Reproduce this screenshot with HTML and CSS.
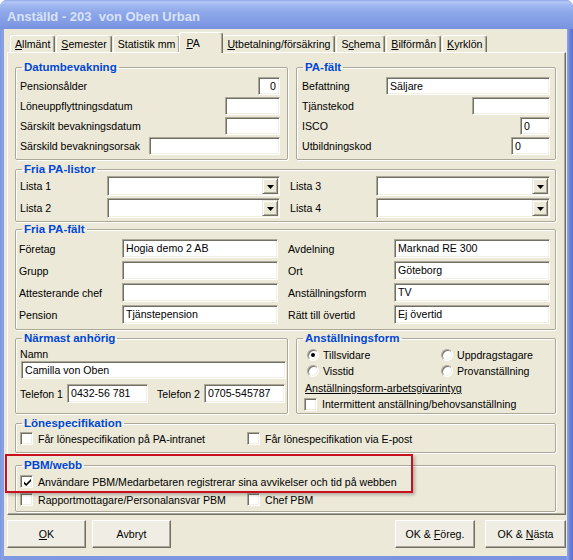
FILE: index.html
```html
<!DOCTYPE html>
<html lang="sv">
<head>
<meta charset="utf-8">
<title>Anställd - 203 von Oben Urban</title>
<link rel="stylesheet" href="styles.css">
</head>
<body>
<div class="window">
  <div class="titlebar">Anställd - 203  von Oben Urban</div>
  <div class="client">
    <div class="tabs">
      <div class="tab"><u>A</u>llmänt</div>
      <div class="tab"><u>S</u>emester</div>
      <div class="tab">Statistik mm</div>
      <div class="tab active"><u>P</u>A</div>
      <div class="tab"><u>U</u>tbetalning/försäkring</div>
      <div class="tab">S<u>c</u>hema</div>
      <div class="tab"><u>B</u>ilförmån</div>
      <div class="tab"><u>K</u>yrklön</div>
    </div>
    <div class="panel">
      <div class="row">
        <fieldset class="group g-top g-left">
          <legend>Datumbevakning</legend>
          <div class="stack datum">
            <div class="frow"><span>Pensionsålder</span><span class="field w22 num">0</span></div>
            <div class="frow"><span>Löneuppflyttningsdatum</span><span class="field w55"></span></div>
            <div class="frow"><span>Särskilt bevakningsdatum</span><span class="field w55"></span></div>
            <div class="frow"><span>Särskild bevakningsorsak</span><span class="field w131"></span></div>
          </div>
        </fieldset>
        <fieldset class="group g-top g-right">
          <legend>PA-fält</legend>
          <div class="stack pafalt">
            <div class="frow"><span>Befattning</span><span class="field w164">Säljare</span></div>
            <div class="frow"><span>Tjänstekod</span><span class="field w78"></span></div>
            <div class="frow"><span>ISCO</span><span class="field w30">0</span></div>
            <div class="frow"><span>Utbildningskod</span><span class="field w39">0</span></div>
          </div>
        </fieldset>
      </div>

      <fieldset class="group g-listor">
        <legend>Fria PA-listor</legend>
        <div class="listgrid">
          <span>Lista 1</span>
          <span class="field combo"><span class="ddbtn"><svg width="7" height="4" viewBox="0 0 7 4"><path d="M0 0H7L3.5 4Z" fill="#000"/></svg></span></span>
          <span class="col2">Lista 3</span>
          <span class="field combo"><span class="ddbtn"><svg width="7" height="4" viewBox="0 0 7 4"><path d="M0 0H7L3.5 4Z" fill="#000"/></svg></span></span>
          <span>Lista 2</span>
          <span class="field combo"><span class="ddbtn"><svg width="7" height="4" viewBox="0 0 7 4"><path d="M0 0H7L3.5 4Z" fill="#000"/></svg></span></span>
          <span class="col2">Lista 4</span>
          <span class="field combo"><span class="ddbtn"><svg width="7" height="4" viewBox="0 0 7 4"><path d="M0 0H7L3.5 4Z" fill="#000"/></svg></span></span>
        </div>
      </fieldset>

      <fieldset class="group g-fria">
        <legend>Fria PA-fält</legend>
        <div class="friagrid">
          <span>Företag</span><span class="field">Hogia demo 2 AB</span>
          <span class="col2">Avdelning</span><span class="field">Marknad RE 300</span>
          <span>Grupp</span><span class="field"></span>
          <span class="col2">Ort</span><span class="field">Göteborg</span>
          <span>Attesterande chef</span><span class="field"></span>
          <span class="col2">Anställningsform</span><span class="field">TV</span>
          <span>Pension</span><span class="field">Tjänstepension</span>
          <span class="col2">Rätt till övertid</span><span class="field">Ej övertid</span>
        </div>
      </fieldset>

      <div class="row row4">
        <fieldset class="group g-mid g-left">
          <legend>Närmast anhörig</legend>
          <div class="anhorig">
            <div class="namnlbl">Namn</div>
            <span class="field namn">Camilla von Oben</span>
            <div class="telrow">
              <span class="tl">Telefon 1</span><span class="field tel">0432-56 781</span>
              <span class="tl tl2">Telefon 2</span><span class="field tel">0705-545787</span>
            </div>
          </div>
        </fieldset>
        <fieldset class="group g-mid g-right">
          <legend>Anställningsform</legend>
          <div class="anstform">
            <div class="radios">
              <span class="ropt"><span class="radio on"></span>Tillsvidare</span>
              <span class="ropt"><span class="radio"></span>Uppdragstagare</span>
              <span class="ropt"><span class="radio"></span>Visstid</span>
              <span class="ropt"><span class="radio"></span>Provanställning</span>
            </div>
            <div class="link">Anställningsform-arbetsgivarintyg</div>
            <div class="opt opt-int"><span class="cb"></span>Intermittent anställning/behovsanställning</div>
          </div>
        </fieldset>
      </div>

      <fieldset class="group g-lone">
        <legend>Lönespecifikation</legend>
        <div class="optgrid lonegrid">
          <div class="opt"><span class="cb"></span>Får lönespecifikation på PA-intranet</div>
          <div class="opt"><span class="cb"></span>Får lönespecifikation via E-post</div>
        </div>
      </fieldset>

      <fieldset class="group g-pbm">
        <legend>PBM/webb</legend>
        <div class="pbmbody">
          <div class="opt"><span class="cb"><svg width="9" height="9" viewBox="0 0 9 9"><path d="M1 3.6L3.2 5.8L8 1V3.3L3.2 8.1L1 5.9Z" fill="#000"/></svg></span>Användare PBM/Medarbetaren registrerar sina avvikelser och tid på webben</div>
          <div class="optgrid pbmgrid">
            <div class="opt"><span class="cb"></span>Rapportmottagare/Personalansvar PBM</div>
            <div class="opt"><span class="cb"></span>Chef PBM</div>
          </div>
        </div>
      </fieldset>
    </div>

    <div class="buttons">
      <div class="btn b-ok"><span><u>O</u>K</span></div>
      <div class="btn b-avbryt">Avbryt</div>
      <div class="spacer"></div>
      <div class="btn b-foreg"><span>OK &amp; <u>F</u>öreg.</span></div>
      <div class="btn b-nasta"><span>OK &amp; <u>N</u>ästa</span></div>
    </div>
  </div>
  <div class="highlight"></div>
</div>
</body>
</html>
```
FILE: styles.css
```css
html, body {
  margin: 0;
  padding: 0;
  background: #ffffff;
}

body {
  font-family: "Liberation Sans", Arial, sans-serif;
  font-size: 10.6px;
  color: #000;
}

.window {
  position: relative;
  width: 573px;
  height: 560px;
  display: flex;
  flex-direction: column;
  border-radius: 7px 7px 0 0;
  overflow: hidden;
  background: linear-gradient(to right, #7d98e1 0, #8aa3e6 3px, #7f98e2 4px, #7a92e0 566px, #8ea4ea 567px, #6a82d8 570px, #5a6fcf 573px);
}

.titlebar {
  flex: none;
  height: 29px;
  box-sizing: border-box;
  padding: 4px 0 0 7px;
  display: flex;
  align-items: center;
  white-space: pre;
  font-family: "Liberation Sans", Arial, sans-serif;
  font-weight: bold;
  font-size: 13px;
  color: #d9e3f8;
  background: linear-gradient(to bottom, #8fa8e8 0, #b3c8f5 2px, #a2b9f0 5px, #8ea8ea 12px, #859fe6 20px, #7c97e2 26px, #7591de 29px);
}

.client {
  flex: 1;
  margin: 0 6px 4px 4px;
  background: #ece9d8;
  padding: 3px 1px 0 3px;
  display: flex;
  flex-direction: column;
}

/* Tabs */
.tabs {
  flex: none;
  display: flex;
  align-items: flex-end;
  gap: 1px;
  height: 20px;
  padding-left: 3px;
}

.tab {
  height: 17px;
  box-sizing: border-box;
  padding: 0 4px;
  line-height: 16px;
  white-space: nowrap;
  border: 1px solid #fff;
  border-right-color: #716f64;
  border-bottom: none;
  border-radius: 3px 3px 0 0;
  box-shadow: inset -1px 0 0 #aca899;
  background: #ece9d8;
}

.tab.active {
  position: relative;
  z-index: 1;
  width: 44px;
  height: 21px;
  margin: 0 -2px -1px -2px;
  padding: 2px 0 0 6px;
}

/* Panel */
.panel {
  flex: none;
  height: 463px;
  box-sizing: border-box;
  border: 1px solid;
  border-color: #fff #716f64 #716f64 #fff;
  box-shadow: inset -1px -1px 0 #aca899;
  padding: 7px 9px 0 7px;
}

.row {
  display: flex;
  gap: 8px;
}

.group {
  margin: 0;
  padding: 0;
  min-width: 0;
  box-sizing: border-box;
  border: 1px solid #aca899;
  border-radius: 2px;
  box-shadow: inset 1px 1px 0 #fff, 1px 1px 0 #fff;
}

.group legend {
  margin-left: 6px;
  padding: 0 2px;
  font-weight: bold;
  font-size: 11.5px;
  line-height: 14px;
  color: #0046d5;
}

.g-left { width: 273px; }
.g-right { width: 260px; }
.g-top { height: 100px; }
.g-listor { height: 60px; margin-top: 2px; }
.g-fria { height: 108px; }
.row4 { margin-top: 1px; }
.g-mid { height: 83px; }
.g-lone { height: 37px; margin-top: 2px; }
.g-pbm { height: 54px; margin-top: 5px; }

/* Fields */
.field {
  display: block;
  box-sizing: border-box;
  height: 18px;
  background: #fff;
  border: 1px solid;
  border-color: #aca899 #fff #fff #aca899;
  box-shadow: inset 1px 1px 0 #716f64, inset -1px -1px 0 #f1efe2;
  padding: 0 3px;
  line-height: 16px;
  white-space: nowrap;
  overflow: hidden;
}

.num { text-align: right; }
.w22 { width: 22px; }
.w55 { width: 55px; }
.w131 { width: 131px; }
.w164 { width: 164px; }
.w78 { width: 78px; }
.w30 { width: 30px; }
.w39 { width: 39px; }

.stack {
  display: flex;
  flex-direction: column;
  gap: 2px;
}

.datum { padding: 3px 7px 0 4px; }
.pafalt { padding: 3px 5px 0 5px; }

.frow {
  display: flex;
  justify-content: space-between;
  align-items: center;
  height: 18px;
}

/* Lists */
.listgrid {
  display: grid;
  grid-template-columns: 87px 173px 96px 174px;
  grid-auto-rows: 20px;
  row-gap: 2px;
  align-items: center;
  padding: 0 5px 0 4px;
}

.col2 { padding-left: 10px; }

.combo {
  height: 20px;
  display: flex;
  justify-content: flex-end;
  padding: 0;
}

.ddbtn {
  width: 16px;
  margin: 1px;
  box-sizing: border-box;
  border: 1px solid;
  border-color: #ece9d8 #716f64 #716f64 #ece9d8;
  box-shadow: inset 1px 1px 0 #fff, inset -1px -1px 0 #aca899;
  background: #ece9d8;
  display: flex;
  align-items: center;
  justify-content: center;
}

.ddbtn svg { display: block; margin-top: 1px; }

/* Fria PA-fält */
.friagrid {
  display: grid;
  grid-template-columns: 103px 156px 116px 156px;
  grid-auto-rows: 19px;
  row-gap: 3px;
  align-items: center;
  padding: 3px 5px 0 3px;
}

.friagrid .field { height: 19px; line-height: 17px; }

/* Närmast anhörig */
.anhorig { padding: 2px 1px 0 4px; }

.namnlbl { line-height: 14px; }

.namn { width: 265px; margin-left: 1px; }

.telrow {
  display: flex;
  align-items: center;
  height: 19px;
  margin-top: 5px;
}

.tl { width: 47px; flex: none; }
.tl2 { margin-left: 9px; }
.tel { width: 81px; height: 19px; line-height: 17px; flex: none; }

/* Anställningsform */
.anstform { padding: 2px 0 0 8px; }

.radios {
  display: grid;
  grid-template-columns: 134px auto;
  grid-auto-rows: 16px;
  margin-left: 2px;
}

.ropt {
  display: flex;
  align-items: center;
  gap: 4px;
}

.radio {
  width: 12px;
  height: 12px;
  box-sizing: border-box;
  border-radius: 50%;
  border: 1px solid;
  border-color: #aca899 #fff #fff #aca899;
  box-shadow: inset 1px 1px 0 #716f64, inset -1px -1px 0 #f1efe2;
  background: #fff;
  display: flex;
  align-items: center;
  justify-content: center;
  flex: none;
}

.radio.on::after {
  content: "";
  width: 4px;
  height: 4px;
  border-radius: 50%;
  background: #000;
}

.link {
  margin-top: 2px;
  line-height: 14px;
  text-decoration: underline;
}

.opt {
  display: flex;
  align-items: center;
  gap: 5px;
  height: 13px;
  white-space: nowrap;
}

.opt-int { margin-top: 2px; margin-left: -1px; height: 14px; }

.cb {
  width: 13px;
  height: 13px;
  box-sizing: border-box;
  flex: none;
  background: #fff;
  border: 1px solid;
  border-color: #aca899 #fff #fff #aca899;
  box-shadow: inset 1px 1px 0 #716f64, inset -1px -1px 0 #f1efe2;
  display: flex;
  align-items: center;
  justify-content: center;
}

.cb svg { display: block; margin: 1px 0 0 1px; }

.optgrid {
  display: grid;
  grid-template-columns: 227px auto;
}

.lonegrid { padding: 2px 0 0 4px; }

.pbmbody { padding: 3px 0 0 4px; }
.pbmgrid { margin-top: 5px; }

/* Buttons */
.buttons {
  flex: none;
  display: flex;
  height: 28px;
  margin-top: 5px;
}

.spacer { flex: 1; }

.btn {
  box-sizing: border-box;
  height: 28px;
  display: flex;
  align-items: center;
  justify-content: center;
  background: #f0eee4;
  border: 1px solid;
  border-color: #fff #716f64 #716f64 #fff;
  box-shadow: inset -1px -1px 0 #aca899;
  white-space: nowrap;
}

.b-ok { width: 79px; }
.b-avbryt { width: 79px; margin-left: 6px; }
.b-foreg { width: 80px; }
.b-nasta { width: 81px; margin-left: 10px; }

/* Annotation overlay */
.highlight {
  position: absolute;
  left: 5px;
  top: 454px;
  width: 408px;
  height: 39px;
  box-sizing: border-box;
  border: 2px solid #c8101e;
  box-shadow: 2px 2px 3px rgba(70, 70, 60, 0.35);
  pointer-events: none;
}
```
